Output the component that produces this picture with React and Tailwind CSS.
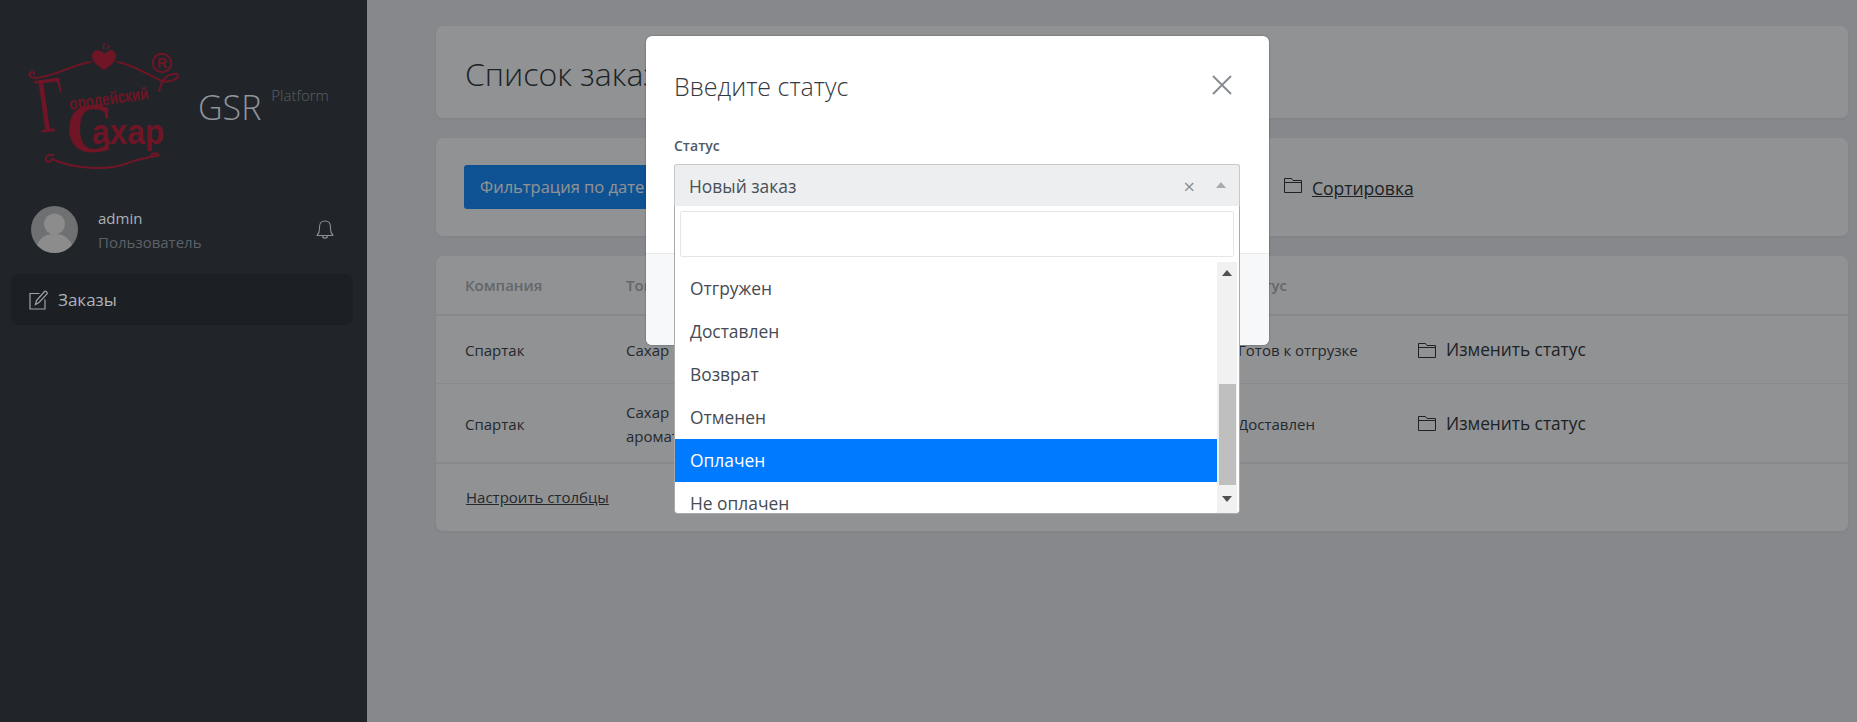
import React from 'react';

const FONT = "font-['Open_Sans','Noto_Sans',sans-serif]";

const FolderIcon = ({ className }) => (
  <svg viewBox="0 0 18 15" width="18" height="15" fill="none" stroke="currentColor" strokeWidth="1" className={className}>
    <path d="M0.5 14.5V0.5H7.5L9 2.5H17.5V14.5Z" />
    <path d="M0.5 4.5H17.5" />
  </svg>
);

const Logo = () => (
  <svg viewBox="0 0 152 126" width="152" height="126" className="block" fill="none">
    {/* сердце */}
    <path d="M76 27C70 23 64 19 64 13C64 8 69 6 73 8C75 9 76 10 76.500 11C77 10 78 9 80 8C84 6 88 8 88 13C88 19 82 23 76 27Z" fill="#6f1526" />
    <path d="M76 7C75 4 75 2 77 0M80 6C79 5 80 3 82 3" stroke="#6f1526" strokeWidth="1.500" />
    {/* завитки сверху */}
    <path d="M63 19C46 21 28 33 8 35C3 35 0 32 2 30C4 28 7 29 6 32" stroke="#6f1526" strokeWidth="2" />
    <path d="M89 19C104 21 120 32 134 38C140 40 150 36 150 33C149 29 141 31 137 35C134 38 132 43 131 49" stroke="#6f1526" strokeWidth="2" />
    {/* завитки снизу */}
    <path d="M26 112C21 111 17 113 18 117C19 120 23 119 24 116C45 126 80 128 100 120C112 115 122 115 131 112C128 109 124 110 123 113" stroke="#6f1526" strokeWidth="2" />
    {/* значок R */}
    <circle cx="134" cy="20" r="9.200" stroke="#6f1526" strokeWidth="2" />
    <text x="134" y="25" textAnchor="middle" fontSize="14" fontWeight="700" fill="#6f1526" fontFamily="Liberation Sans, sans-serif">R</text>
    {/* название */}
    <text fontSize="80" fill="#6f1526" fontFamily="Liberation Serif, serif" transform="translate(12 90) rotate(-8) scale(0.62 1)">Г</text>
    <text fontSize="15" fontWeight="700" fill="#6f1526" fontFamily="Liberation Sans, sans-serif" transform="translate(42 67) rotate(-8) scale(0.9 1.150)">ородейский</text>
    <text fontSize="70" fontWeight="700" fill="#6f1526" fontFamily="Liberation Serif, serif" transform="translate(38 109) scale(0.95 1)">С</text>
    <text fontSize="36" fontWeight="700" fill="#6f1526" fontFamily="Liberation Sans, sans-serif" transform="translate(64 101) scale(0.88 1)">ахар</text>
  </svg>
);

const Avatar = () => (
  <svg viewBox="0 0 47 47" width="47" height="47" className="shrink-0">
    <circle cx="23.500" cy="23.500" r="23.500" fill="#6f7072" />
    <circle cx="23.500" cy="18" r="10.500" fill="#8c8c8d" />
    <path d="M6 39C9 31 16 28 23.500 28C31 28 38 31 41 39C37 44 30 47 23.500 47C17 47 10 44 6 39Z" fill="#8c8c8d" />
  </svg>
);

const BellIcon = () => (
  <svg viewBox="0 0 18 20" width="18" height="20" fill="none" stroke="#8b8f94" strokeWidth="1.100">
    <path d="M1 15.500C3 13.500 3.500 12 3.500 9V7C3.500 3.500 5.500 1 9 1C12.500 1 14.500 3.500 14.500 7V9C14.500 12 15 13.500 17 15.500Z" strokeLinejoin="round" />
    <path d="M6.500 15.500C6.500 19 11.500 19 11.500 15.500" />
  </svg>
);

const EditIcon = () => (
  <svg viewBox="0 0 20 20" width="20" height="20" fill="none" stroke="#a0a4a8" strokeWidth="1.200">
    <path d="M10.500 3.500H1V19H16V9.500" />
    <path d="M6.500 14.500L7.500 10.500L15.500 1.500C16.500 0.500 19 2.500 18 4L10 12.500Z" />
  </svg>
);

const CaretUp = ({ className }) => (
  <span className={`block h-0 w-0 border-x-[5px] border-b-[6px] border-x-transparent ${className}`} />
);

const CaretDown = ({ className }) => (
  <span className={`block h-0 w-0 border-x-[5px] border-t-[6px] border-x-transparent ${className}`} />
);

const options = ['Отгружен', 'Доставлен', 'Возврат', 'Отменен', 'Оплачен', 'Не оплачен'];

const rows = [
  { id: 1, company: 'Спартак', product: 'Сахар', status: 'Готов к отгрузке', height: 'h-[68px]' },
  { id: 2, company: 'Спартак', product: 'Сахар\nароматизированный', status: 'Доставлен', height: 'h-[80px]' },
];

const COLS = 'grid grid-cols-[161px_612px_180px_1fr] items-center pl-[29px]';

const Sidebar = () => (
  <aside className="relative z-20 w-[367px] shrink-0 bg-[#212529] pl-[11px] pr-[14px]">
    <div className="flex h-[200px] items-start pl-[17px] pt-[43px]">
      <Logo />
      <span className="ml-[18px] mt-[39px] text-[34px] leading-[50px] font-light text-[#8f949a]">GSR</span>
      <span className="ml-[10px] mt-[41px] text-[15px] leading-[22px] font-light text-[#5b6066]">Platform</span>
    </div>
    <div className="flex h-[59px] items-center pl-[20px] pr-[19px]">
      <Avatar />
      <div className="ml-[20px] flex-1 pt-[1px]">
        <div className="text-[15px] leading-[24px] text-[#aab0b6]">admin</div>
        <div className="text-[15px] leading-[24px] text-[#5c6167]">Пользователь</div>
      </div>
      <BellIcon />
    </div>
    <div className="mt-[15px] flex h-[51px] items-center rounded-lg bg-[#1c1f24] pl-[18px]">
      <EditIcon />
      <span className="ml-[9px] text-[17px] text-[#aeb4ba]">Заказы</span>
    </div>
  </aside>
);

const Card = ({ className = '', children }) => (
  <div className={`rounded-[7px] bg-white shadow-[0_1px_4px_rgba(0,0,0,0.06)] ${className}`}>{children}</div>
);

const OrdersTable = () => (
  <Card className="h-[275px]">
    <div className={`${COLS} h-[60px] border-b-2 border-[#eceef1] text-[15px] font-semibold text-[#b0b3b9]`}>
      <span>Компания</span>
      <span>Товар</span>
      <span>Статус</span>
    </div>
    {rows.map((row, i) => (
      <div
        key={row.id}
        className={`${COLS} ${row.height} border-b pt-[1px] ${i === rows.length - 1 ? 'border-b-2 border-[#eceef1]' : 'border-[#eff0f3]'} text-[15px] leading-[24px] text-[#3f4750]`}
      >
        <span>{row.company}</span>
        <span className="whitespace-pre-line">{row.product}</span>
        <span>{row.status}</span>
        <span className="flex items-center text-[17.300px] text-[#343a40]">
          <FolderIcon className="mr-[10px]" />
          Изменить статус
        </span>
      </div>
    ))}
    <div className="flex h-[67px] items-center pl-[30px]">
      <span className="text-[15px] text-[#3f4750] underline">Настроить столбцы</span>
    </div>
  </Card>
);

const StatusDropdown = () => (
  <div className="absolute left-[-1px] right-[-1px] top-[41px] h-[308px] overflow-hidden rounded-b-[4px] border-x border-b border-[#aaa] bg-white">
    <div className="mx-[5px] mt-[5px] h-[46px] rounded-[2px] border border-[#e4e6e8] bg-white" />
    <div className="mt-[5px] flex h-[251px]">
      <ul className="flex-1 overflow-hidden pt-[5px] text-[17.400px] text-[#444b52]">
        {options.map((opt) => (
          <li
            key={opt}
            className={`flex h-[43px] shrink-0 items-center pl-[15px] ${opt === 'Оплачен' ? 'bg-[#007bff] text-white' : ''}`}
          >
            {opt}
          </li>
        ))}
      </ul>
      <div className="mr-[2px] flex w-[20px] flex-col items-center bg-[#f1f1f1]">
        <div className="flex h-[22px] items-center pb-[1px]"><CaretUp className="border-b-[#505050]" /></div>
        <div className="mt-[100px] h-[101px] w-[17px] bg-[#bfbfbf]" />
        <div className="flex flex-1 items-center"><CaretDown className="border-t-[#505050]" /></div>
      </div>
    </div>
  </div>
);

const StatusModal = () => (
  <div className="absolute left-[646px] top-[36px] z-10 h-[309px] w-[623px] rounded-[6px] bg-white shadow-[0_0_2px_rgba(0,0,0,0.4)]">
    <div className="absolute inset-x-0 bottom-0 h-[92px] rounded-b-[6px] border-t border-[#e9ecef] bg-[#f7f8fa]" />
    <div className="flex h-[100px] items-start justify-between pl-[28px] pr-[37px] pt-[30px]">
      <h2 className="text-[25px] leading-[40px] font-light text-[#343a40]">Введите статус</h2>
      <svg viewBox="0 0 20 20" width="20" height="20" className="mt-[9px]" stroke="#868d94" strokeWidth="2" fill="none">
        <path d="M1 1L19 19M19 1L1 19" />
      </svg>
    </div>
    <div className="relative px-[28px]">
      <label className="block text-[14px] leading-[20px] font-semibold text-[#4d5a68]">Статус</label>
      <div className="relative mt-[8px] flex h-[42px] w-[566px] items-center rounded-t-[3px] border border-b-0 border-[#c6c8ca] bg-[#eceeef] pl-[14px] pr-[13px] pt-[2px] text-[17.400px] text-[#4a5057]">
        <span className="flex-1">Новый заказ</span>
        <span className="mr-[21px] text-[20px] leading-none text-[#8c8f92]">×</span>
        <CaretUp className="mb-[3px] border-b-[#a8abae]" />
        <StatusDropdown />
      </div>
    </div>
  </div>
);

const App = () => (
  <div className={`relative flex h-[722px] w-[1857px] overflow-hidden bg-[#edeef2] ${FONT}`}>
    <Sidebar />
    <main className="flex flex-1 flex-col gap-[20px] pl-[69px] pr-[9px] pt-[26px]">
      <Card className="flex h-[92px] items-center pl-[29px] pt-[3px]">
        <h1 className="text-[32px] font-light text-[#343a40]">Список заказов</h1>
      </Card>
      <Card className="flex h-[98px] items-center pl-[28px]">
        <button className="h-[44px] w-[300px] rounded-[3px] bg-[#1b8fff] pl-[16px] pt-[1px] text-left text-[16.500px] text-white">
          Фильтрация по дате
        </button>
        <span className="ml-[520px] flex items-center pt-[2px] text-[17.500px] text-[#343a40]">
          <FolderIcon className="mr-[10px] -translate-y-[3px]" />
          <span className="underline">Сортировка</span>
        </span>
      </Card>
      <OrdersTable />
    </main>
    {/* затемнение под модальным окном */}
    <div className="absolute inset-0 bg-[#010205]/[0.43]" />
    <StatusModal />
  </div>
);

export default App;
